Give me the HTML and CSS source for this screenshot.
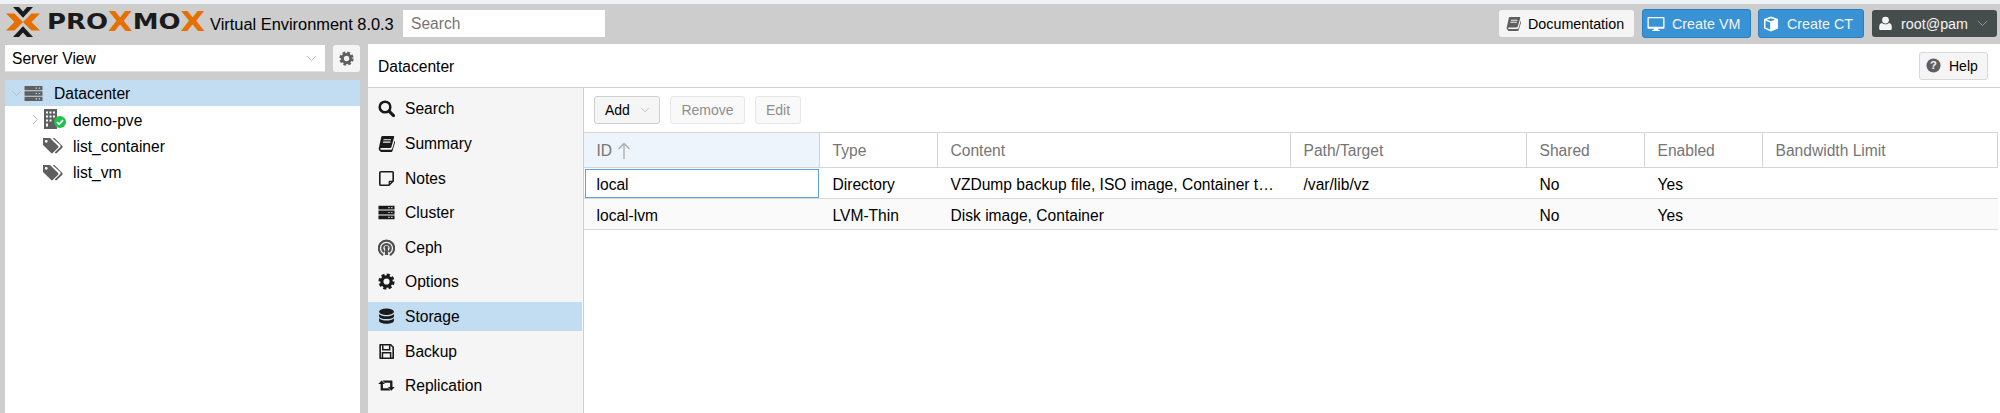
FILE: index.html
```html
<!DOCTYPE html>
<html lang="en">
<head>
<meta charset="utf-8">
<title>Proxmox Virtual Environment</title>
<link rel="stylesheet" href="styles.css">
</head>
<body>
<svg class="defs" width="0" height="0" aria-hidden="true">
  <symbol id="i-search" viewBox="0 0 16 16"><circle cx="6.6" cy="6.6" r="5" fill="none" stroke="currentColor" stroke-width="2.4"/><path d="M10.4 10.4l4.2 4.2" stroke="currentColor" stroke-width="3" stroke-linecap="round"/></symbol>
  <symbol id="i-book" viewBox="0 0 16 16"><path fill="currentColor" d="M4.2 1h10.300c.6 0 .9.5.7 1.100l-2.600 9.200c-.2.7-.7 1-1.300 1H3c-.6 0-.9.3-.9.8s.4.8.9.8h9.200c.6 0 1-.3 1.200-.9l2.200-7.600.4.5c.2.3.2.6.1.9l-2.500 8.200c-.2.6-.7 1-1.300 1H2.900C1.500 15 .6 14 .7 12.700c0-.4.1-.6.2-1l2.100-9.700C3.200 1.400 3.600 1 4.200 1zm1 3v1h7V4zm-.5 2.200v1h7v-1z"/></symbol>
  <symbol id="i-note" viewBox="0 0 16 16"><path fill="none" stroke="currentColor" stroke-width="1.500" stroke-linejoin="round" d="M2.700 1.700h10.600c.6 0 1 .4 1 1v7.600l-4 4H2.700c-.6 0-1-.4-1-1V2.700c0-.6.4-1 1-1z"/><path fill="currentColor" d="M10 14v-3c0-.6.4-1 1-1h3.500v1.200H11.200V14z"/></symbol>
  <symbol id="i-server" viewBox="0 0 18 16"><path fill="currentColor" fill-rule="evenodd" d="M.5 .8h17v4.100H.5zM11 2.300v1.100h1.300V2.300zm3 0v1.100h1.300V2.300zM.5 5.950h17v4.100H.5zM11 7.450v1.100h1.300V7.450zm3 0v1.100h1.300V7.450zM.5 11.100h17v4.100H.5zM11 12.600v1.100h1.300v-1.100zm3 0v1.100h1.300v-1.100z"/></symbol>
  <symbol id="i-ceph" viewBox="0 0 16 16"><g fill="none" stroke="currentColor" stroke-width="2" stroke-linecap="round"><path d="M4.100 14.800A7.200 7.200 0 1 1 11.900 14.800"/><path d="M5.400 11.700A4 4 0 1 1 10.600 11.700"/></g><circle cx="8" cy="8" r="1.800" fill="currentColor"/><path fill="currentColor" d="M6.800 9h2.400l.4 6H6.400z"/></symbol>
  <symbol id="i-gear" viewBox="0 0 16 16"><circle cx="8" cy="8" r="4.400" fill="none" stroke="currentColor" stroke-width="3"/><circle cx="8" cy="8" r="6.300" fill="none" stroke="currentColor" stroke-width="2.600" stroke-dasharray="2.950 2"/></symbol>
  <symbol id="i-db" viewBox="0 0 16 16"><g fill="currentColor"><ellipse cx="8" cy="3.500" rx="7" ry="3"/><path d="M1 5.600C2.300 7.100 5 7.800 8 7.800s5.700-.7 7-2.200v2.100C15 9.300 11.800 10.400 8 10.400S1 9.300 1 7.700z"/><path d="M1 9.600C2.300 11.100 5 11.800 8 11.800s5.700-.7 7-2.200v2.500c0 1.600-3 2.800-7 2.800s-7-1.200-7-2.800z"/></g></symbol>
  <symbol id="i-save" viewBox="0 0 16 16"><path fill="none" stroke="currentColor" stroke-width="1.500" stroke-linejoin="round" d="M2 1.700h10l2.300 2.300v10.300H2z"/><path fill="none" stroke="currentColor" stroke-width="1.400" d="M4.500 2v4.300h6.500V2M4.200 14V9.200h7.700V14"/></symbol>
  <symbol id="i-retweet" viewBox="0 0 18 16"><path fill="currentColor" d="M3.800 2.600L7.400 6.500H5.200V11h6l2 2.400H3.500c-.5 0-.7-.3-.7-.7V6.500H.3zM4.800 2.600h9.800c.4 0 .7.300.7.700v6.200h2.400l-3.600 4-3.600-4h2.300V5H6.800z"/></symbol>
  <symbol id="i-tags" viewBox="1 .5 18 14.500"><path fill="currentColor" d="M1 1h6.300L14.600 8.300c.4.400.4 1 0 1.400l-4.900 4.900c-.4.400-1 .4-1.400 0L1 7.300zm2.900 1.700a1.300 1.300 0 1 0 0 2.600 1.300 1.300 0 0 0 0-2.600z"/><path fill="currentColor" d="M9.500 1h1.800l7.100 7.300c.4.400.4 1 0 1.400l-4.900 4.900c-.4.400-1 .4-1.500 0l-.5-.5 4.900-4.700c.6-.6.6-1.400 0-2z"/></symbol>
  <symbol id="i-monitor" viewBox="0 0 19 16"><path fill="currentColor" fill-rule="evenodd" d="M1.500 .5h16c.6 0 1 .4 1 1v10.500c0 .6-.4 1-1 1h-5.500v1.300h1.500v1.200h-8v-1.200H7V13H1.500c-.6 0-1-.4-1-1V1.500c0-.6.4-1 1-1zm.4 1.400v9.100h15.200V1.900z"/></symbol>
  <symbol id="i-cube" viewBox="0 0 16 16"><path fill="currentColor" fill-rule="evenodd" d="M8 .5l7 2.600v9.300l-7 3.100-7-3.100V3.100zM3.800 3.700L8 5.200l4.200-1.500L8 2.200zM2.500 4.800v6.600l4.700 2.100V6.500z"/></symbol>
  <symbol id="i-user" viewBox="0 0 14 16"><circle cx="7" cy="4.300" r="3.700" fill="currentColor"/><path fill="currentColor" d="M3.200 7.400C4.200 8.300 5.500 8.800 7 8.800s2.800-.5 3.800-1.400c2 .2 3 1.800 3 4.400v1.500c0 1.100-.8 1.700-1.800 1.700H2c-1 0-1.800-.6-1.800-1.700v-1.500c0-2.600 1-4.200 3-4.400z"/></symbol>
  <symbol id="i-chev" viewBox="0 0 16 10"><path fill="none" stroke="currentColor" stroke-width="1.300" d="M1.500 1.500L8 8l6.500-6.500"/></symbol>
  <symbol id="i-chevr" viewBox="0 0 10 16"><path fill="none" stroke="currentColor" stroke-width="1.300" d="M1.500 1.500L8 8l-6.500 6.500"/></symbol>
  <symbol id="i-up" viewBox="0 0 14 18"><path fill="none" stroke="currentColor" stroke-width="1.300" d="M7 17V1.500M1.500 7L7 1.500 12.500 7"/></symbol>
  <symbol id="i-x" viewBox="0 0 34 30"><path fill="#e57000" d="M0 6.500h8.500L17 15l-8.500 8.500H0L8.500 15z"/><path fill="#e57000" d="M34 6.500h-8.500L17 15l8.500 8.500H34L25.500 15z"/><path fill="#1b1b1b" d="M7 0h6l4 4.500L21 0h6l-10 10.800zM7 30h6l4-4.500 4 4.500h6L17 19.200z"/></symbol>
</svg>

<div class="app">
  <div class="strip"></div>
  <header class="header">
    <div class="logo">
      <svg class="logo-x"><use href="#i-x"/></svg>
      <div class="wordmark"><span class="wordmark-text">PRO<b>X</b>MO<b>X</b></span></div>
    </div>
    <div class="version">Virtual Environment 8.0.3</div>
    <div class="search-box">Search</div>
    <div class="spacer"></div>
    <button class="btn-doc"><svg class="ico-book"><use href="#i-book"/></svg>Documentation</button>
    <button class="btn-blue btn-vm"><svg class="ico-monitor"><use href="#i-monitor"/></svg>Create VM</button>
    <button class="btn-blue btn-ct"><svg class="ico-cube"><use href="#i-cube"/></svg>Create CT</button>
    <button class="btn-user"><svg class="ico-user"><use href="#i-user"/></svg>root@pam<svg class="ico-chev-user"><use href="#i-chev"/></svg></button>
  </header>

  <div class="body">
    <aside class="left">
      <div class="view-row">
        <div class="combo"><span class="combo-label">Server View</span><svg class="ico-chev"><use href="#i-chev"/></svg></div>
        <div class="gear-btn"><svg class="ico-gear"><use href="#i-gear"/></svg></div>
      </div>
      <div class="tree">
        <div class="tree-row is-selected">
          <svg class="tree-chev"><use href="#i-chev"/></svg>
          <svg class="tree-server"><use href="#i-server"/></svg>
          <span class="tree-label">Datacenter</span>
        </div>
        <div class="tree-row lvl-node">
          <svg class="tree-chevr"><use href="#i-chevr"/></svg>
          <span class="node-ico">
            <svg viewBox="0 0 16 20" class="node-building"><path fill="#5f5f5f" fill-rule="evenodd" d="M1 0h13v20H1zM3 2.500v2h2v-2zm3.500 0v2h2v-2zm3.500 0v2h2v-2zM3 6.500v2h2v-2zm3.500 0v2h2v-2zm3.500 0v2h2v-2zM3 10.500v2h2v-2zm3.500 0v2h2v-2zM3 14.500v3h2v-3z"/></svg>
            <svg viewBox="0 0 14 14" class="node-badge"><circle cx="7" cy="7" r="7" fill="#21bf4b"/><path d="M3.500 7.200l2.500 2.500 4.500-4.800" fill="none" stroke="#fff" stroke-width="2"/></svg>
          </span>
          <span class="tree-label">demo-pve</span>
        </div>
        <div class="tree-row lvl-tag"><svg class="tree-tag"><use href="#i-tags"/></svg><span class="tree-label">list_container</span></div>
        <div class="tree-row lvl-tag"><svg class="tree-tag"><use href="#i-tags"/></svg><span class="tree-label">list_vm</span></div>
      </div>
    </aside>

    <main class="main">
      <div class="title-bar">
        <span class="title-text">Datacenter</span>
        <button class="btn-help"><svg class="ico-help" viewBox="0 0 16 16"><circle cx="8" cy="8" r="7.500" fill="#5f5f5f"/><text x="8" y="12" text-anchor="middle" class="help-q">?</text></svg>Help</button>
      </div>
      <div class="panes">
        <nav class="side">
          <div class="side-item"><svg class="side-ico"><use href="#i-search"/></svg>Search</div>
          <div class="side-item"><svg class="side-ico"><use href="#i-book"/></svg>Summary</div>
          <div class="side-item"><svg class="side-ico"><use href="#i-note"/></svg>Notes</div>
          <div class="side-item"><svg class="side-ico"><use href="#i-server"/></svg>Cluster</div>
          <div class="side-item"><svg class="side-ico ceph"><use href="#i-ceph"/></svg>Ceph</div>
          <div class="side-item"><svg class="side-ico"><use href="#i-gear"/></svg>Options</div>
          <div class="side-item is-active"><svg class="side-ico"><use href="#i-db"/></svg>Storage</div>
          <div class="side-item"><svg class="side-ico"><use href="#i-save"/></svg>Backup</div>
          <div class="side-item"><svg class="side-ico"><use href="#i-retweet"/></svg>Replication</div>
        </nav>
        <section class="content">
          <div class="toolbar">
            <button class="tb-btn tb-add">Add<svg class="ico-chev-add"><use href="#i-chev"/></svg></button>
            <button class="tb-btn tb-off tb-remove">Remove</button>
            <button class="tb-btn tb-off tb-edit">Edit</button>
          </div>
          <table class="grid">
            <colgroup>
              <col class="c-id"><col class="c-type"><col class="c-content"><col class="c-path"><col class="c-shared"><col class="c-enabled"><col class="c-bw">
            </colgroup>
            <thead>
              <tr>
                <th class="is-sorted">ID<svg class="ico-up"><use href="#i-up"/></svg></th>
                <th>Type</th><th>Content</th><th>Path/Target</th><th>Shared</th><th>Enabled</th><th>Bandwidth Limit</th>
              </tr>
            </thead>
            <tbody>
              <tr>
                <td class="is-focus">local</td><td>Directory</td><td>VZDump backup file, ISO image, Container t…</td><td>/var/lib/vz</td><td>No</td><td>Yes</td><td></td>
              </tr>
              <tr class="alt">
                <td>local-lvm</td><td>LVM-Thin</td><td>Disk image, Container</td><td></td><td>No</td><td>Yes</td><td></td>
              </tr>
            </tbody>
          </table>
        </section>
      </div>
    </main>
  </div>
</div>
</body>
</html>
```

FILE: styles.css
```css
* { box-sizing: border-box; }
html, body { margin: 0; height: 100%; overflow: hidden; }
body { font-family: "Liberation Sans", Arial, sans-serif; font-size: 15.6px; color: #000; background: #cdcdcd; }
button { font: inherit; margin: 0; padding: 0; cursor: default; }
svg { display: block; flex: none; }
.defs { position: absolute; }

.app { height: 413px; display: flex; flex-direction: column; }
.strip { height: 4px; background: #eef1f6; flex: none; }

.header { height: 40px; flex: none; display: flex; align-items: center; padding: 0 3px 0 6px; }
.logo { display: flex; align-items: center; width: 204px; height: 30px; margin-top: -5px; }
.logo-x { width: 34px; height: 30px; }
.wordmark { width: 158px; margin-left: 7px; }
.wordmark-text { display: inline-block; font-family: "DejaVu Sans", sans-serif; font-weight: 700; font-size: 22px; line-height: 24px; color: #1b1b1b; transform: scaleX(1.18); transform-origin: left center; white-space: nowrap; }
.wordmark-text b { color: #e57000; font-size: 27px; line-height: 20px; vertical-align: -1.500px; }
.version { width: 193px; font-size: 16.400px; white-space: nowrap; }
.search-box { width: 202px; height: 27px; background: #fff; color: #757575; line-height: 28px; padding-left: 8px; margin-top: -1px; }
.spacer { flex: 1; }

.btn-doc, .btn-blue, .btn-user { display: flex; align-items: center; border-radius: 3px; white-space: nowrap; font-size: 14.300px; }
.btn-doc { width: 135px; height: 27px; margin-top: -1px; background: #f5f5f5; border: 0; padding-left: 7px; color: #000; }
.btn-blue { height: 29px; margin-top: -1px; background: #3892d4; border: 1px solid #2a7fc0; color: #f5f5f5; }
.btn-vm { width: 109px; margin-left: 8px; padding-left: 4px; }
.btn-ct { width: 106px; margin-left: 7px; padding-left: 4px; }
.btn-user { width: 125px; height: 27px; margin: -1px 0 0 8px; background: #464d4d; border: 0; color: #f5f5f5; padding-left: 7px; }
.ico-book { width: 15px; height: 15px; margin-right: 7px; color: #5f5f5f; }
.ico-monitor { width: 18px; height: 16px; margin-right: 7px; color: #fff; }
.ico-cube { width: 16px; height: 16px; margin-right: 8px; color: #fff; }
.ico-user { width: 13px; height: 15px; margin-right: 9px; color: #f5f5f5; }
.ico-chev-user { width: 11px; height: 7px; margin-left: 9px; color: #9aa0a0; }

.body { flex: 1; display: flex; min-height: 0; }
.left { width: 355px; margin-left: 5px; flex: none; display: flex; flex-direction: column; padding-top: 1px; }
.view-row { display: flex; gap: 8px; height: 27px; flex: none; }
.combo { flex: 1; background: #fff; display: flex; align-items: center; justify-content: space-between; padding: 0 8px 0 7px; border-bottom: 1px solid #e2e2e2; }
.combo-label { padding-top: 2px; }
.ico-chev { width: 11px; height: 7px; color: #b5b5b5; }
.gear-btn { width: 27px; background: #f5f5f5; border-radius: 3px; display: flex; align-items: center; justify-content: center; }
.ico-gear { width: 15px; height: 15px; color: #5f5f5f; }

.tree { flex: 1; margin-top: 8px; background: #fff; }
.tree-row { height: 26.400px; display: flex; align-items: center; white-space: nowrap; }
.tree-label { padding-top: 2px; }
.is-selected { background: #c2ddf2; padding-left: 6px; }
.tree-chev { width: 11px; height: 7px; color: #b5b5b5; }
.tree-server { width: 19px; height: 17px; margin-left: 2px; margin-right: 11px; color: #5f5f5f; }
.lvl-node { padding-left: 27px; }
.tree-chevr { width: 7px; height: 11px; color: #b5b5b5; margin-right: 4px; }
.node-ico { width: 23px; height: 21px; position: relative; margin-right: 7px; }
.node-building { width: 16px; height: 20px; }
.node-badge { position: absolute; right: 0; bottom: 2px; width: 12px; height: 12px; }
.lvl-tag { padding-left: 38px; }
.tree-tag { width: 20px; height: 17px; margin-right: 10px; color: #5f5f5f; }

.main { margin-left: 8px; flex: 1; background: #fff; display: flex; flex-direction: column; min-width: 0; }
.title-bar { height: 44px; flex: none; display: flex; align-items: center; justify-content: space-between; padding: 0 12px 0 10px; border-bottom: 1px solid #d0d0d0; }
.title-text { padding-top: 2px; }
.btn-help { width: 69px; height: 28px; display: flex; align-items: center; background: #f5f5f5; border: 1px solid #d9d9d9; border-radius: 3px; padding-left: 6px; color: #000; font-size: 14px; }
.ico-help { width: 15px; height: 15px; margin-right: 8px; }
.help-q { font-family: "Liberation Sans", sans-serif; font-weight: 700; font-size: 12px; fill: #f5f5f5; }

.panes { flex: 1; display: flex; min-height: 0; }
.side { width: 216px; flex: none; background: #f5f5f5; border-right: 1px solid #cfcfcf; padding-top: 6.400px; padding-right: 1px; }
.side-item { height: 29px; margin-bottom: 5.600px; display: flex; align-items: center; padding-left: 10px; padding-top: 1px; white-space: nowrap; }
.side-ico { width: 17px; height: 17px; margin-right: 10px; margin-top: -1px; color: #1a1a1a; }
.ceph { color: #4f4f4f; }
.is-active { background: #c2ddf2; }

.content { flex: 1; min-width: 0; }
.toolbar { height: 44px; display: flex; align-items: center; padding-left: 10px; }
.tb-btn { height: 28px; border-radius: 3px; color: #000; background: #f5f5f5; border: 1px solid #cfcfcf; display: flex; align-items: center; justify-content: center; font-size: 14px; }
.tb-add { width: 66px; justify-content: flex-start; padding-left: 10px; }
.ico-chev-add { width: 10px; height: 6px; margin-left: 10px; color: #b5b5b5; }
.tb-off { background: #f9f9f9; border-color: #e6e6e6; color: #8e8e8e; }
.tb-remove { width: 75px; margin-left: 10px; }
.tb-edit { width: 46px; margin-left: 10px; }

.grid { width: 1414px; table-layout: fixed; border-collapse: separate; border-spacing: 0; }
.c-id { width: 236px; } .c-type { width: 118px; } .c-content { width: 353px; } .c-path { width: 236px; }
.c-shared { width: 118px; } .c-enabled { width: 118px; } .c-bw { width: 235px; }
.grid th { height: 36px; padding: 2px 0 0 12.500px; font-weight: 400; text-align: left; color: #757575; background: #fff; border-top: 1px solid #d4d4d4; border-bottom: 1px solid #d4d4d4; border-right: 1px solid #d4d4d4; }
.grid th.is-sorted { background: #edf4fb; }
.ico-up { display: inline-block; width: 14px; height: 18px; margin-left: 5px; vertical-align: -4px; color: #aaa; }
.grid td { height: 31px; padding: 4px 0 0 12.500px; border-bottom: 1px solid #d8d8d8; white-space: nowrap; overflow: hidden; }
.grid td.is-focus { outline: 1.500px solid #5aa5dc; outline-offset: -2px; }
.grid tr.alt td { background: #fafafa; }
```
